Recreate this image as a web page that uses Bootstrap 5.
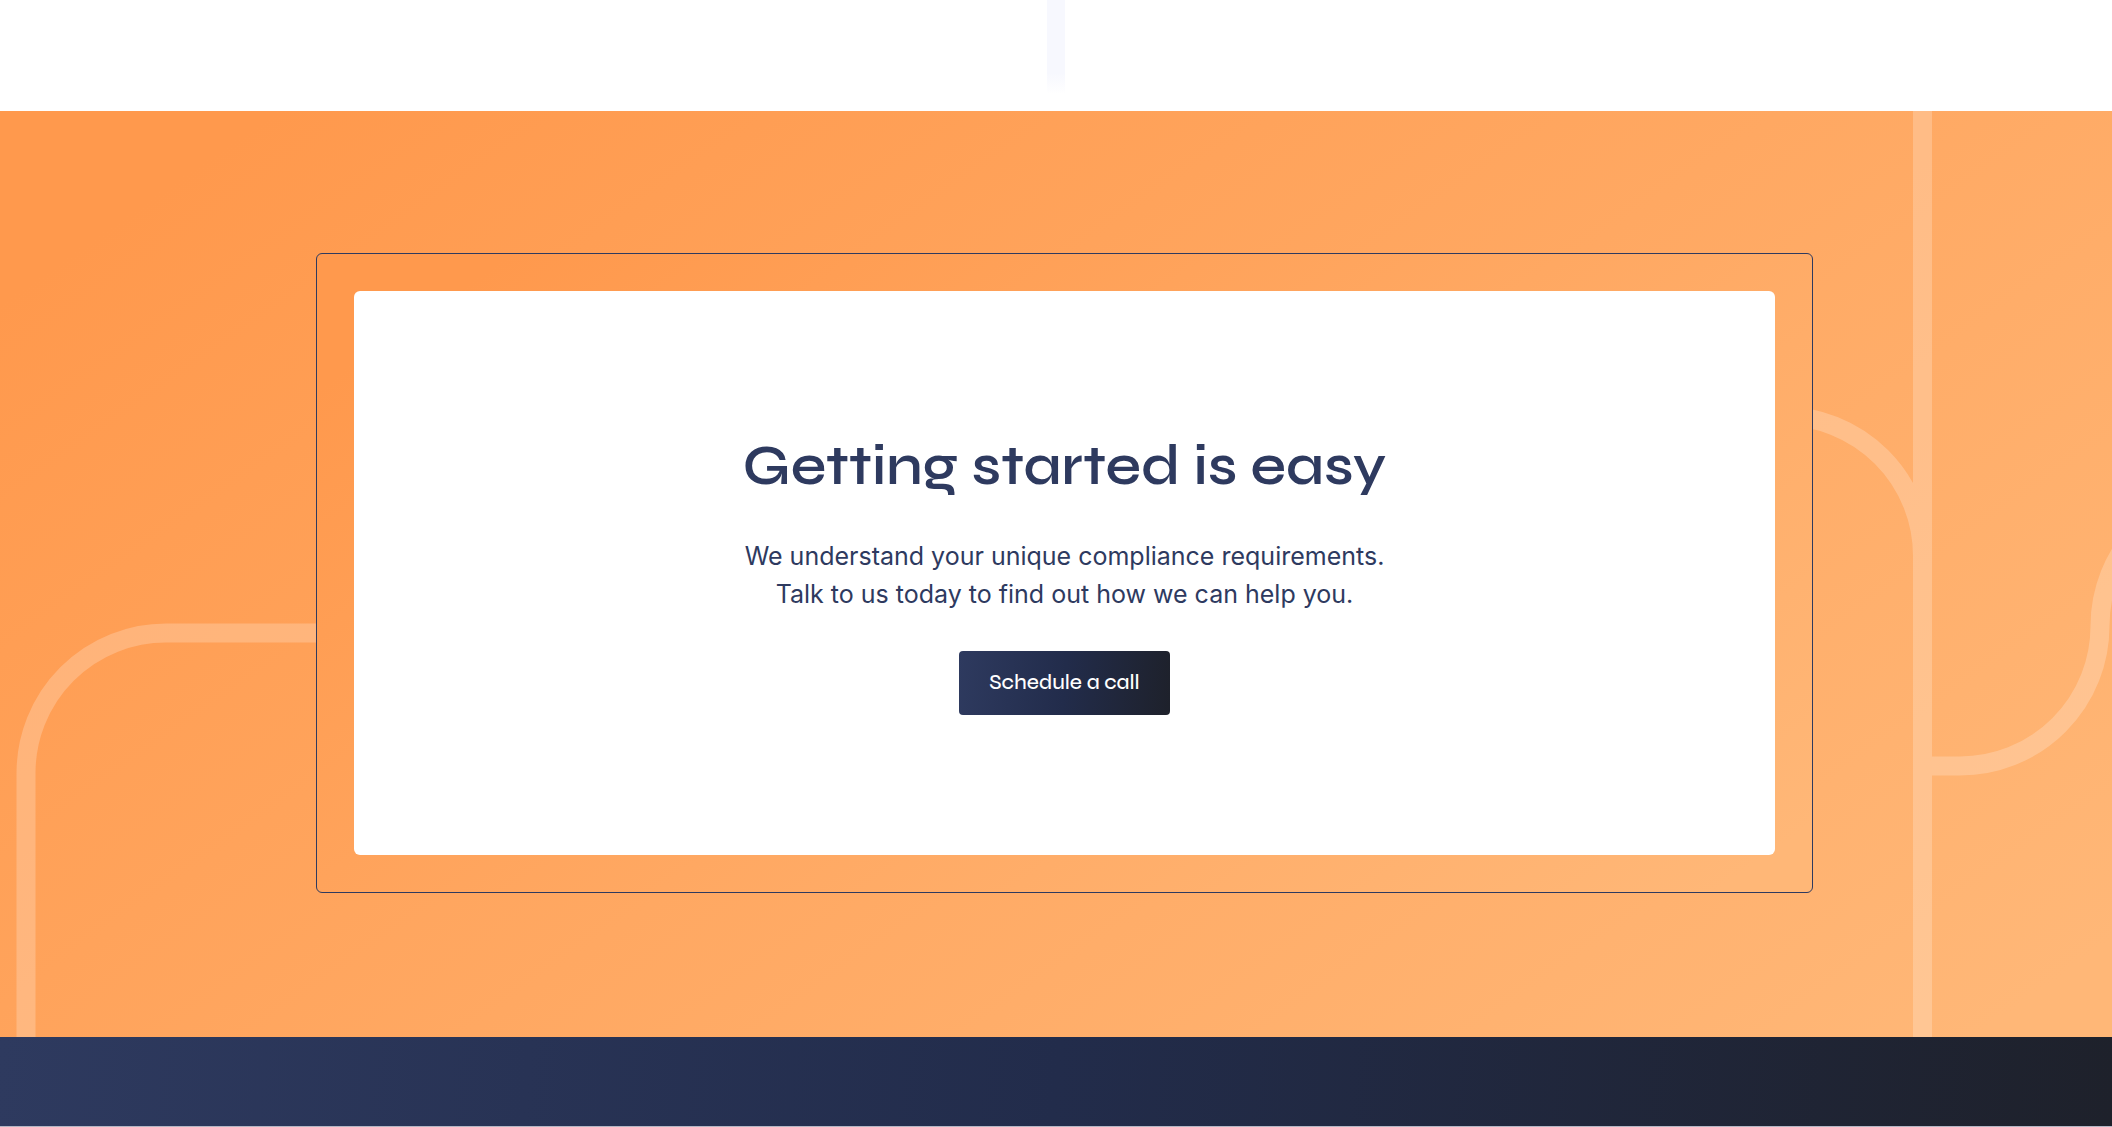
<!DOCTYPE html>
<html lang="en">
<head>
<meta charset="utf-8">
<meta name="viewport" content="width=device-width, initial-scale=1">
<title>Getting started is easy</title>
<link href="https://cdn.jsdelivr.net/npm/bootstrap@5.3.0/dist/css/bootstrap.min.css" rel="stylesheet">
<style>
body { font-family: Syne, Inter, sans-serif; color: #2e3a5f; background: #fff; }
.connector-strip { height: 111px; }
.connector-line { width: 18px; height: 94px; background: linear-gradient(#f7f8fe 78%, #fff); }
.warm-fill { background: linear-gradient(145deg, #ff994d 8%, #ffb777 96%); }
.cta-band { padding: 142px 299px 144px 316px; }
.band-art { position: absolute; top: 0; height: 100%; fill: none; stroke: #fff; stroke-opacity: .22; stroke-width: 19; }
.cta-frame { border: 1px solid #2e3a5f; border-radius: 6px; padding: 37px; }
.cta-panel { border-radius: 6px; padding: 142px 24px 140px; }
.cta-title { font-size: 57px; line-height: 66px; font-weight: 600; margin-bottom: 38px; }
.cta-copy { font-family: Inter, sans-serif; font-size: 25px; line-height: 38px; margin-bottom: 38px; }
.navy-fill { background: linear-gradient(95deg, #2e3a5f, #222c4b 50%, #1e212b); }
.cta-button { color: #fff; font-size: 21px; font-weight: 500; line-height: 32px; padding: 16px 30px; border: 0; border-radius: 4px; }
.cta-button:hover { color: #fff; }
.footer-strip { height: 89px; }
.footer-rule { height: 1px; background: #b4b6c4; }
@media (max-width: 1000px) { .cta-band { padding: 60px 24px; } .cta-panel { padding: 60px 24px; } .cta-title { font-size: 40px; } }
</style>
</head>
<body>
<div class="connector-strip d-flex justify-content-center align-items-start"><div class="connector-line"></div></div>
<main>
<section class="cta-band warm-fill position-relative overflow-hidden">
  <svg class="band-art start-0" width="420" viewBox="0 111 420 926" aria-hidden="true"><path d="M26 1037V773A140 140 0 0 1 166 633H420"/></svg>
  <svg class="band-art end-0" width="412" viewBox="1700 111 412 926" aria-hidden="true">
    <clipPath id="leftOfBar"><path d="M1700 111H1913V1037H1700Z"/></clipPath>
    <path clip-path="url(#leftOfBar)" d="M1782.500 416A140 140 0 0 1 1922.500 556"/>
    <path d="M1922.500 111V1037"/>
    <path d="M1932 766H1960A140 140 0 0 0 2100 626A140 140 0 0 1 2240 486"/>
  </svg>
  <div class="cta-frame warm-fill position-relative">
    <div class="cta-panel bg-white text-center">
      <h2 class="cta-title">Getting started is easy</h2>
      <p class="cta-copy">We understand your unique compliance requirements.<br>Talk to us today to find out how we can help you.</p>
      <button type="button" class="btn cta-button navy-fill">Schedule a call</button>
    </div>
  </div>
</section>
</main>
<footer><div class="footer-strip navy-fill"></div><div class="footer-rule"></div></footer>
<script src="https://cdn.jsdelivr.net/npm/bootstrap@5.3.0/dist/js/bootstrap.bundle.min.js"></script>
</body>
</html>
